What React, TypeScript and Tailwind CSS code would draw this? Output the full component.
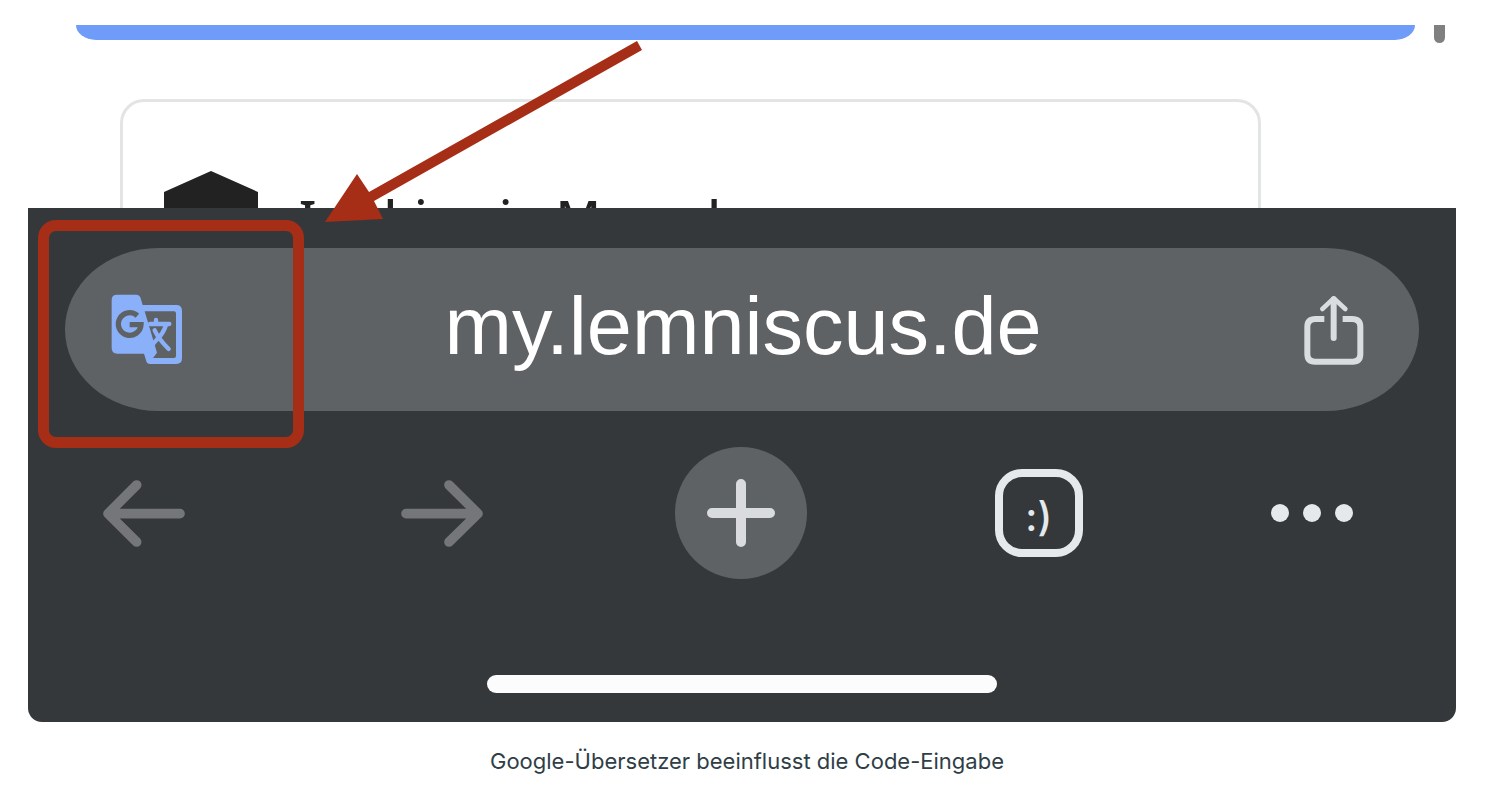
import React from "react";

function TranslateIcon() {
  return (
    <svg viewBox="270 280 222 219" className="h-[73px] w-[74px]" fill="none" aria-hidden="true">
      <path
        d="M291 285H350Q358 285 361 293L368 316H469Q486 316 486 333V476Q486 493 469 493H390Q381 493 379 485L372 462H292Q275 462 275 445V301Q275 285 291 285Z"
        fill="#8ab0fa"
      />
      <path d="M374 335H462Q468 335 468 341V469Q468 475 462 475H399L411 459L374 335Z" fill="#5f6265" />
      <path
        d="M408 361V373M390 373H448M438 376Q430 402 410 420L398 434M404 392Q416 418 446 448"
        stroke="#8ab0fa"
        strokeWidth="13"
        strokeLinecap="round"
      />
      <path d="M352 348A34 34 0 1 0 363 375H329" stroke="#5f6265" strokeWidth="16" />
    </svg>
  );
}

function ShareIcon() {
  return (
    <svg viewBox="155 164 192 216" className="h-[72px] w-[64px]" fill="none" stroke="#d9dde0" aria-hidden="true">
      <path
        d="M222 239H196Q171 239 171 262V344Q171 367 194 367H307Q330 367 330 344V262Q330 239 305 239H277"
        strokeWidth="18"
      />
      <path d="M250 180V296" strokeWidth="18" strokeLinecap="round" />
      <path d="M216 209L250 177L285 209" strokeWidth="14" strokeLinecap="round" strokeLinejoin="round" />
    </svg>
  );
}

function ArrowIcon({ forward = false }: { forward?: boolean }) {
  return (
    <svg
      viewBox="0 0 246 204"
      className="h-[68px] w-[82px]"
      fill="none"
      stroke="#747679"
      strokeWidth="29"
      strokeLinecap="round"
      strokeLinejoin="round"
      aria-hidden="true"
    >
      {forward ? (
        <path d="M144 18L231 104L144 189M15 104H225" />
      ) : (
        <path d="M101 18L15 104L101 189M22 104H231" />
      )}
    </svg>
  );
}

function PageContent() {
  return (
    <div className="h-[183px] overflow-hidden bg-white">
      <div className="flex items-start">
        <div className="ml-12 h-[15px] flex-1 rounded-[0_0_20px_20px/0_0_15px_15px] bg-[#709cf9]" />
        <div className="mr-[11px] ml-[19px] h-[18px] w-[11px] rounded-b-full bg-[#808080]" />
      </div>
      <div className="mt-14 mr-[195px] ml-[92px] flex items-center gap-10 rounded-3xl border-[3px] border-[#e3e4e4] px-10 pt-[69px] pb-16">
        <svg viewBox="0 0 94 94" className="h-[94px] w-[96px]" aria-hidden="true">
          <path d="M47 0L94 21V73L47 94L0 73V21Z" fill="#222222" />
        </svg>
        <p className="pb-0.5 font-['Noto_Sans',sans-serif] text-[49px] leading-[60px] font-medium whitespace-nowrap text-[#222222]">
          Ich bin ein Mensch
        </p>
      </div>
    </div>
  );
}

function BrowserBar() {
  return (
    <div className="rounded-b-[14px] bg-[#35383a] pt-10 pb-[29px]">
      <div className="mr-[37px] ml-[37px] flex h-[163px] items-center rounded-[94px/82px] bg-[#5f6265] pr-[53px] pl-[45px]">
        <button type="button" aria-label="Übersetzen">
          <TranslateIcon />
        </button>
        <input
          type="text"
          aria-label="Adresse"
          defaultValue="my.lemniscus.de"
          className="h-28 min-w-0 flex-1 bg-transparent pb-1.5 text-center font-['Liberation_Sans',Arial,sans-serif] text-[81px] text-white outline-none"
        />
        <button type="button" aria-label="Teilen">
          <ShareIcon />
        </button>
      </div>
      <div className="mt-9 mr-[102px] ml-[50px] flex items-center justify-between">
        <button type="button" aria-label="Zurück" className="flex w-[132px] justify-center">
          <ArrowIcon />
        </button>
        <button type="button" aria-label="Vorwärts" className="flex w-[132px] justify-center">
          <ArrowIcon forward />
        </button>
        <button
          type="button"
          aria-label="Neuer Tab"
          className="flex size-[132px] items-center justify-center rounded-full bg-[#5f6265]"
        >
          <svg viewBox="0 0 68 68" className="size-[68px]" stroke="#d9dbde" strokeWidth="10" strokeLinecap="round" aria-hidden="true">
            <path d="M34 5V63M5 34H63" />
          </svg>
        </button>
        <button type="button" className="flex w-[132px] justify-center">
          <span className="flex size-[88px] items-center justify-center rounded-[27px] border-8 border-[#e5e9ec] pt-2 text-[40px] leading-none font-medium text-[#e5e9ec]">
            :)
          </span>
        </button>
        <button type="button" aria-label="Mehr">
          <svg viewBox="0 0 83 18" className="h-[18px] w-[83px]" fill="#e5e9ec" aria-hidden="true">
            <circle cx="9" cy="9" r="9" />
            <circle cx="41" cy="9" r="9" />
            <circle cx="73" cy="9" r="9" />
          </svg>
        </button>
      </div>
      <div className="mx-auto mt-24 h-[18px] w-[510px] rounded-full bg-[#fcfcfd]" />
    </div>
  );
}

export default function App() {
  return (
    <main className="bg-white font-['Inter',sans-serif]">
      <figure className="pt-[25px]">
        <div className="relative mr-[50px] ml-7">
          <PageContent />
          <BrowserBar />
          <div className="pointer-events-none absolute top-[195px] left-[10px] h-[228px] w-[266px] rounded-[18px] border-[11px] border-[#a62d16]" />
          <svg
            viewBox="325 41 317 182"
            className="pointer-events-none absolute top-4 left-[297px] h-[182px] w-[317px]"
            fill="#a62d16"
            aria-hidden="true"
          >
            <path d="M325 222L357 174L369 192L637 41L642 50L374 201L383 219Z" />
          </svg>
        </div>
        <figcaption className="mt-[23px] pr-3 text-center text-[22px] leading-8 text-[#2f3e46]">
          Google-Übersetzer beeinflusst die Code-Eingabe
        </figcaption>
      </figure>
    </main>
  );
}
